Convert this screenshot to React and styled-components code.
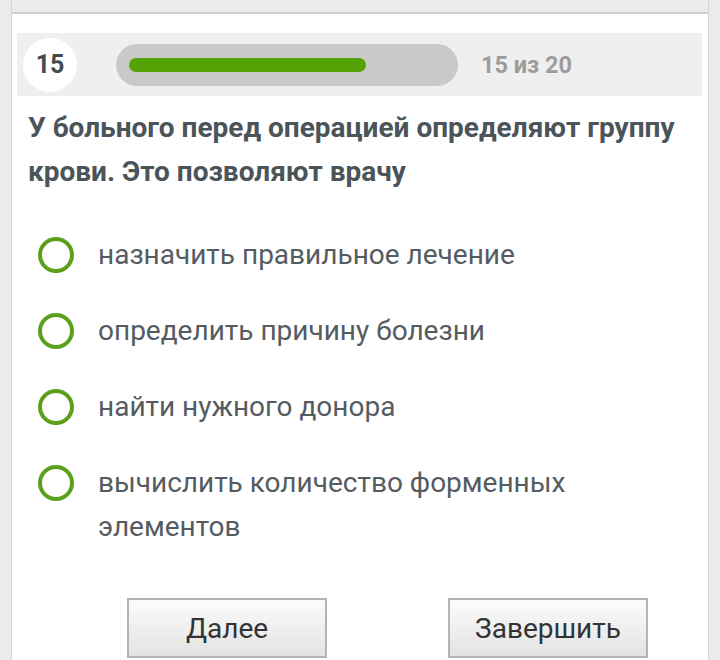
import styled, { createGlobalStyle } from "styled-components";

const GlobalStyle = createGlobalStyle`
  html, body {
    margin: 0;
    padding: 0;
    background: #ebebeb;
    font-family: Roboto, "Liberation Sans", sans-serif;
  }
`;

const Frame = styled.div`
  height: 660px;
  padding: 0 11px;
  background: #ebebeb;
  overflow: hidden;
`;

const Panel = styled.div`
  height: 100%;
  background: #fff;
  border-left: 1px solid #d6d6d6;
  border-right: 1px solid #d6d6d6;
`;

const TopBar = styled.div`
  height: 12px;
  background: #ececec;
  border-bottom: 2px solid #cfcfcf;
`;

const ProgressRow = styled.div`
  display: flex;
  align-items: center;
  height: 63px;
  margin: 19px 6px 0 5px;
  background: #efefef;
`;

const Counter = styled.div`
  width: 54px;
  height: 54px;
  margin-left: 6px;
  border-radius: 50%;
  background: #fff;
  display: flex;
  align-items: center;
  justify-content: center;
  font-size: 25px;
  font-weight: 700;
  color: #444a4d;
`;

const Track = styled.div`
  width: 342px;
  height: 42px;
  margin-left: 39px;
  border-radius: 21px;
  background: #c9c9c9;
  display: flex;
  align-items: center;
  padding-left: 13px;
  box-sizing: border-box;
`;

const Fill = styled.div`
  height: 14px;
  border-radius: 7px;
  background: #52a303;
`;

const ProgressLabel = styled.div`
  margin-left: 23px;
  font-size: 23.5px;
  font-weight: 700;
  color: #9c9c9c;
`;

const Question = styled.div`
  margin: 10px 0 0;
  padding: 0 16px;
  font-size: 28px;
  line-height: 44px;
  font-weight: 700;
  color: #4a5459;
`;

const Options = styled.div`
  margin-top: 39px;
  padding-left: 26px;
  display: flex;
  flex-direction: column;
  gap: 32px;
`;

const Option = styled.label`
  display: flex;
  align-items: flex-start;
  gap: 24px;
  cursor: pointer;
`;

const Radio = styled.span`
  flex: none;
  width: 36px;
  height: 36px;
  margin-top: 4px;
  box-sizing: border-box;
  border-radius: 50%;
  border: 4px solid #5aa01c;
`;

const OptionText = styled.span`
  font-size: 28px;
  line-height: 44px;
  color: #545c61;
  padding-right: 100px;
`;

const Buttons = styled.div`
  display: flex;
  gap: 121px;
  margin-top: 49px;
  padding-left: 115px;
`;

const Button = styled.button`
  width: 200px;
  height: 60px;
  border: 2px solid #b4b4b4;
  border-radius: 0;
  background: linear-gradient(#fbfbfb, #e3e3e3);
  font-family: Roboto, "Liberation Sans", sans-serif;
  font-size: 28px;
  color: #333;
  cursor: pointer;
`;

const options = [
  "назначить правильное лечение",
  "определить причину болезни",
  "найти нужного донора",
  "вычислить количество форменных элементов",
];

const App = () => {
  const current = 15;
  const total = 20;
  return (
    <Frame>
      <GlobalStyle />
      <Panel>
        <TopBar />
        <ProgressRow>
          <Counter>{current}</Counter>
          <Track>
            <Fill style={{ width: 237 }} />
          </Track>
          <ProgressLabel>
            {current} из {total}
          </ProgressLabel>
        </ProgressRow>
        <Question>
          У больного перед операцией определяют группу крови. Это позволяют
          врачу
        </Question>
        <Options>
          {options.map((o) => (
            <Option key={o}>
              <Radio />
              <OptionText>{o}</OptionText>
            </Option>
          ))}
        </Options>
        <Buttons>
          <Button>Далее</Button>
          <Button>Завершить</Button>
        </Buttons>
      </Panel>
    </Frame>
  );
};

export default App;
